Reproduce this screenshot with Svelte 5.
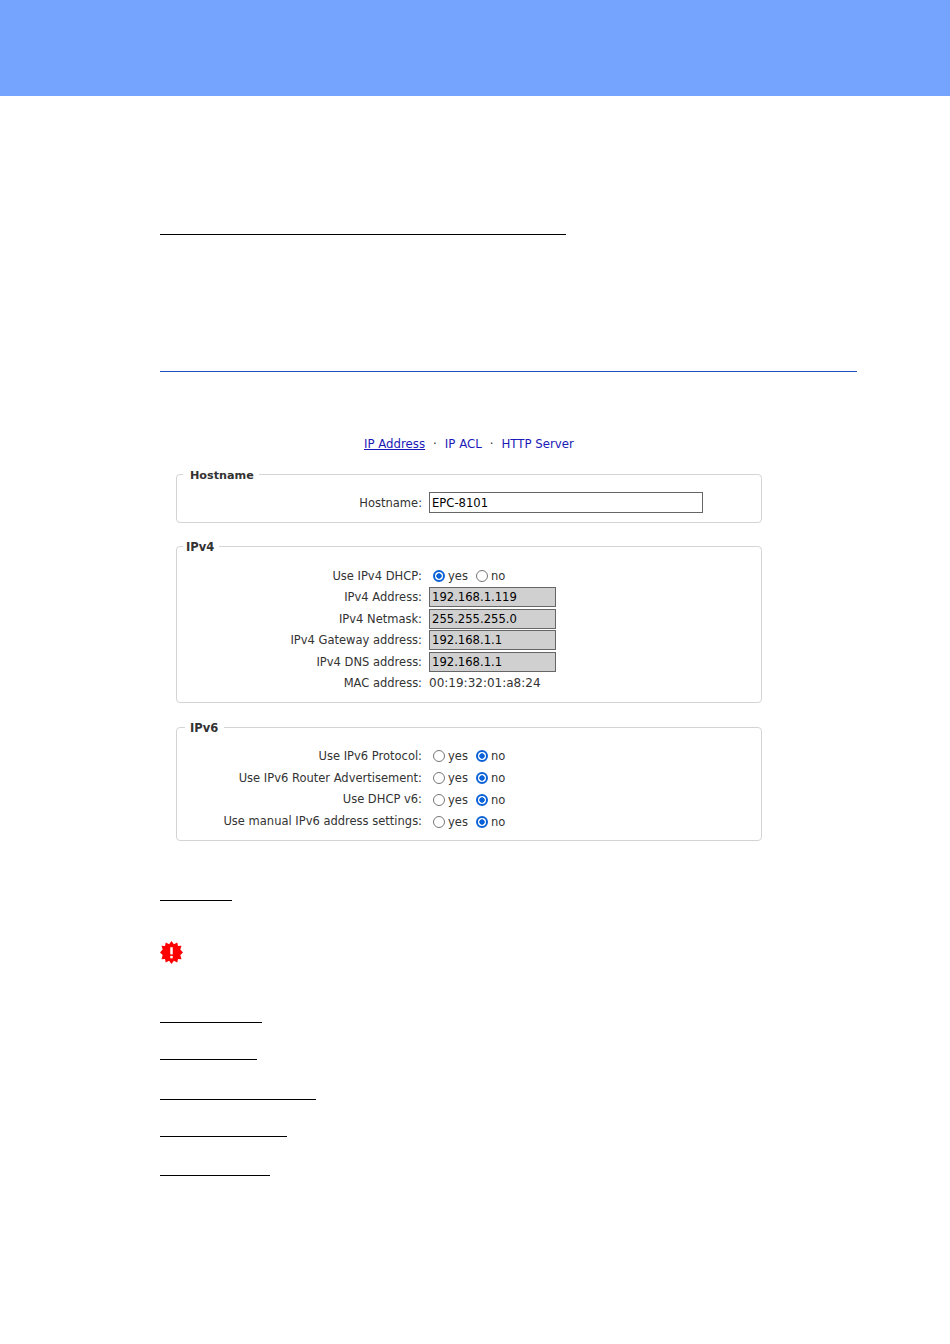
<script lang="ts">
    interface Row {
        label: string;
        type: 'options' | 'input' | 'text';
        value?: string;
        checked?: 'yes' | 'no';
    }

    const ipv4: Row[] = [
        { label: 'Use IPv4 DHCP:', type: 'options', checked: 'yes' },
        { label: 'IPv4 Address:', type: 'input', value: '192.168.1.119' },
        { label: 'IPv4 Netmask:', type: 'input', value: '255.255.255.0' },
        { label: 'IPv4 Gateway address:', type: 'input', value: '192.168.1.1' },
        { label: 'IPv4 DNS address:', type: 'input', value: '192.168.1.1' },
        { label: 'MAC address:', type: 'text', value: '00:19:32:01:a8:24' },
    ];

    const ipv6: Row[] = [
        { label: 'Use IPv6 Protocol:', type: 'options', checked: 'no' },
        { label: 'Use IPv6 Router Advertisement:', type: 'options', checked: 'no' },
        { label: 'Use DHCP v6:', type: 'options', checked: 'no' },
        { label: 'Use manual IPv6 address settings:', type: 'options', checked: 'no' },
    ];

    // the underlined headings further down the page: width and distance to the previous one
    const rules = [
        { width: 102, gap: 58 },
        { width: 97, gap: 36 },
        { width: 156, gap: 39 },
        { width: 127, gap: 36 },
        { width: 110, gap: 38 },
    ];
</script>

{#snippet radio(on: boolean)}
    <span class="radio" class:on></span>
{/snippet}

{#snippet rows(list: Row[])}
    {#each list as row}
        <div class="row {row.type}">
            <span class="label">{row.label}</span>
            {#if row.type === 'options'}
                <span class="choice">
                    {@render radio(row.checked === 'yes')}<span class="yes">yes</span>
                    {@render radio(row.checked === 'no')}<span>no</span>
                </span>
            {:else if row.type === 'input'}
                <span class="field grey">{row.value}</span>
            {:else}
                <span class="value">{row.value}</span>
            {/if}
        </div>
    {/each}
{/snippet}

<header class="banner"></header>

<main class="page">
    <div class="rule first"></div>
    <div class="rule blue"></div>

    <nav class="tabs">
        <a class="current" href="#ip">IP Address</a>
        <span class="dot">·</span>
        <a href="#acl">IP ACL</a>
        <span class="dot">·</span>
        <a href="#http">HTTP Server</a>
    </nav>

    <section class="forms">
        <fieldset class="host">
            <legend>Hostname</legend>
            <div class="row">
                <span class="label">Hostname:</span>
                <span class="field wide">EPC-8101</span>
            </div>
        </fieldset>

        <fieldset class="v4">
            <legend>IPv4</legend>
            {@render rows(ipv4)}
        </fieldset>

        <fieldset class="v6">
            <legend>IPv6</legend>
            {@render rows(ipv6)}
        </fieldset>
    </section>

    <div class="rule short"></div>

    <svg class="warn" width="23" height="23" viewBox="0 0 24 24" aria-hidden="true">
        <polygon fill="#f00" points="12,0 14.5,3.5 18,1.6 18.8,5.2 22.4,5 21.2,8.8 24,12 21.2,14.6 22.4,19 18.8,18.8 18,22.4 14.5,20.5 12,24 9.5,20.5 6,22.4 5.2,18.8 1.6,19 2.8,14.6 0,12 2.8,8.8 1.6,5 5.2,5.2 6,1.6 9.5,3.5" />
        <rect x="10.7" y="6.5" width="2.6" height="7.5" fill="#fff" />
        <rect x="10.7" y="15.5" width="2.6" height="2.6" fill="#fff" />
    </svg>

    {#each rules as rule}
        <div class="rule" style="width: {rule.width}px; margin-top: {rule.gap}px"></div>
    {/each}
</main>

<style>
    :global(body) {
        margin: 0;
        background: #fff;
    }

    .banner {
        height: 96px;
        background: #75a4ff;
    }

    .page {
        padding: 138px 93px 0 160px;
        font-family: "DejaVu Sans", Verdana, sans-serif;
        font-size: 11.5px;
        color: #333;
    }

    .rule {
        height: 1px;
        background: #000;
    }

    .first {
        width: 406px;
    }

    .blue {
        margin-top: 136px;
        background: #1b4fc0;
    }

    .tabs {
        margin: 64px 0 0 204px;
        display: flex;
        gap: 8px;
        font-size: 11.75px;
        line-height: 16px;
    }

    .tabs a {
        color: #1a1ab8;
        text-decoration: none;
    }

    .tabs a.current {
        text-decoration: underline;
    }

    .forms {
        margin: 15px 95px 0 16px;
        display: flex;
        flex-direction: column;
        gap: 16px;
    }

    fieldset {
        margin: 0;
        border: 1px solid #d4d4d4;
        border-radius: 4px;
        padding: 0;
    }

    legend {
        font-weight: bold;
        line-height: 13px;
        color: #333;
    }

    .host legend {
        font-size: 11.2px;
        margin-left: 6px;
        padding: 2px 5px 0 7px;
    }

    .v4 legend {
        margin-left: 6px;
        padding: 2px 5px 0 3px;
    }

    .v6 legend {
        margin-left: 8px;
        padding: 2px 6px 0 5px;
    }

    .host {
        padding: 9px 0 8px;
    }

    .v4 {
        padding: 11px 0 10px;
    }

    .v6 {
        margin-top: 1px;
        padding: 10px 0 8px;
    }

    .row {
        display: grid;
        grid-template-columns: 245px auto;
        column-gap: 7px;
        align-items: center;
        justify-items: start;
    }

    .host .row {
        height: 23px;
    }

    .v4 .options {
        height: 21px;
    }

    .row.input {
        height: 21.75px;
    }

    .row.text {
        height: 19px;
    }

    .v6 .row {
        height: 21.75px;
    }

    .v6 .choice {
        margin-top: 1px;
    }

    .label {
        justify-self: end;
    }

    .value {
        font-size: 12px;
    }

    .field {
        box-sizing: border-box;
        height: 20px;
        line-height: 19px;
        border: 1px solid #666;
        padding: 0 2px;
        font-size: 11.6px;
        color: #000;
    }

    .wide {
        width: 274px;
        height: 21px;
        line-height: 20px;
    }

    .grey {
        width: 127px;
        background: #d0d0d0;
    }

    .choice {
        display: flex;
        align-items: center;
        padding-left: 4px;
    }

    .radio {
        box-sizing: border-box;
        width: 12px;
        height: 12px;
        border: 1px solid #767676;
        border-radius: 50%;
        margin-right: 3px;
    }

    .radio.on {
        border: 2px solid #0b62d6;
        background: radial-gradient(circle, #0b62d6 0 2.4px, #fff 3px);
    }

    .yes {
        margin-right: 8px;
    }

    .warn {
        display: block;
        margin-top: 40px;
    }

    .short {
        width: 72px;
        margin-top: 59px;
    }
</style>
